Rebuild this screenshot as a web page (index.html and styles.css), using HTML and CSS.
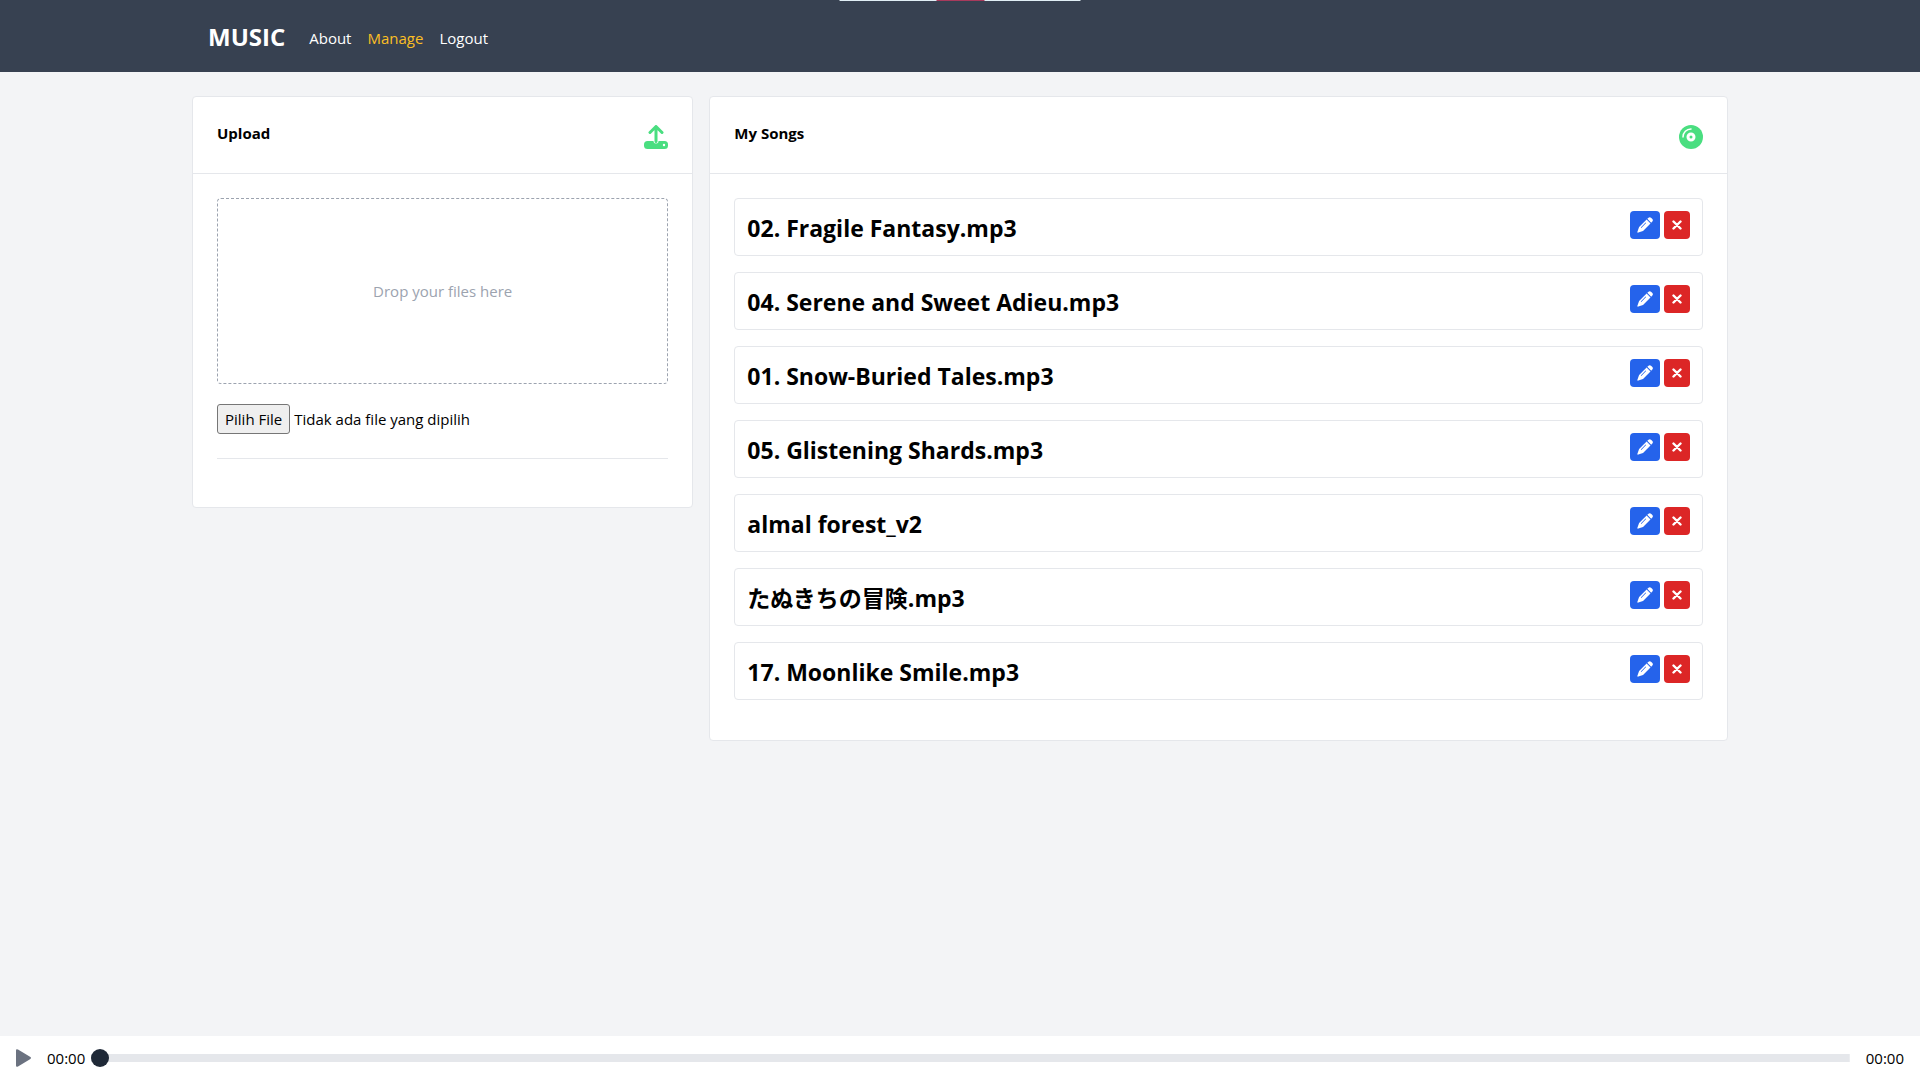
FILE: index.html
```html
<!DOCTYPE html>
<html lang="id">
<head>
<meta charset="utf-8">
<meta name="viewport" content="width=device-width, initial-scale=1">
<title>Music</title>
<link rel="stylesheet" href="styles.css">
</head>
<body>
<svg class="sprite" aria-hidden="true">
  <symbol id="pencil" viewBox="0 0 16 16">
    <path fill="currentColor" d="M11.200.9a2.200 2.200 0 0 1 3.100 0l.8.8a2.200 2.200 0 0 1 0 3.100L14.200 5.700 10.300 1.800z"/>
    <path fill="currentColor" fill-rule="evenodd" d="M9.600 2.500 13.500 6.400 6 13.900 1.300 15.600a.7.7 0 0 1-.9-.9L2.100 10zM4.300 10.900l4.800-4.800-.5-.5-4.800 4.800z"/>
  </symbol>
  <symbol id="cross" viewBox="0 0 10 10">
    <path fill="none" stroke="currentColor" stroke-width="2.400" stroke-linecap="round" d="M1.500 1.500l7 7M8.500 1.500l-7 7"/>
  </symbol>
</svg>
<div class="drag-handle" aria-hidden="true"><span></span></div>
<header class="navbar">
  <nav class="container nav">
    <a class="brand" href="#">MUSIC</a>
    <ul class="nav-links">
      <li><a href="#">About</a></li>
      <li><a class="active" href="#">Manage</a></li>
      <li><a href="#">Logout</a></li>
    </ul>
  </nav>
</header>
<main class="container columns">
  <section class="card upload">
    <div class="card-head">
      <h2>Upload</h2>
      <svg class="head-icon" viewBox="0 0 24 24" fill="none">
        <rect x="0" y="16" width="24" height="8" rx="3.500" fill="currentColor"/>
        <circle cx="20" cy="20" r="1.200" fill="#fff"/>
        <path d="M12 16V3" stroke="#fff" stroke-width="5" stroke-linecap="round"/>
        <path d="M12 16.500V2M6 7.500 12 1.500l6 6" stroke="currentColor" stroke-width="3" stroke-linecap="round" stroke-linejoin="round"/>
      </svg>
    </div>
    <div class="card-body">
      <div class="dropzone">Drop your files here</div>
      <label class="file">
        <input type="file" multiple>
        <span class="file-button">Pilih File</span>
        <span>Tidak ada file yang dipilih</span>
      </label>
      <hr>
    </div>
  </section>
  <section class="card songs">
    <div class="card-head">
      <h2>My Songs</h2>
      <svg class="head-icon" viewBox="0 0 24 24" fill="none">
        <circle cx="12" cy="12" r="12" fill="currentColor"/>
        <circle cx="12" cy="12" r="3" stroke="#fff" stroke-width="3"/>
        <path d="M4 12a8 8 0 0 1 8-8" stroke="#fff" stroke-width="1.500" stroke-linecap="round"/>
      </svg>
    </div>
    <ul class="card-body song-list">
      <li class="song"><h3>02. Fragile Fantasy.mp3</h3><button class="edit" aria-label="Edit"><svg><use href="#pencil"/></svg></button><button class="delete" aria-label="Delete"><svg><use href="#cross"/></svg></button></li>
      <li class="song"><h3>04. Serene and Sweet Adieu.mp3</h3><button class="edit" aria-label="Edit"><svg><use href="#pencil"/></svg></button><button class="delete" aria-label="Delete"><svg><use href="#cross"/></svg></button></li>
      <li class="song"><h3>01. Snow-Buried Tales.mp3</h3><button class="edit" aria-label="Edit"><svg><use href="#pencil"/></svg></button><button class="delete" aria-label="Delete"><svg><use href="#cross"/></svg></button></li>
      <li class="song"><h3>05. Glistening Shards.mp3</h3><button class="edit" aria-label="Edit"><svg><use href="#pencil"/></svg></button><button class="delete" aria-label="Delete"><svg><use href="#cross"/></svg></button></li>
      <li class="song"><h3>almal forest_v2</h3><button class="edit" aria-label="Edit"><svg><use href="#pencil"/></svg></button><button class="delete" aria-label="Delete"><svg><use href="#cross"/></svg></button></li>
      <li class="song"><h3 lang="ja">たぬきちの冒険.mp3</h3><button class="edit" aria-label="Edit"><svg><use href="#pencil"/></svg></button><button class="delete" aria-label="Delete"><svg><use href="#cross"/></svg></button></li>
      <li class="song"><h3>17. Moonlike Smile.mp3</h3><button class="edit" aria-label="Edit"><svg><use href="#pencil"/></svg></button><button class="delete" aria-label="Delete"><svg><use href="#cross"/></svg></button></li>
    </ul>
  </section>
</main>
<footer class="player">
  <button class="play" aria-label="Play"><svg viewBox="0 0 15 18"><path fill="currentColor" d="M0 1.500Q0-.5 2 .5L14 7.800q2 1.200 0 2.400L2 17.500q-2 1-2-1z"/></svg></button>
  <span class="time">00:00</span>
  <input class="seek" type="range" min="0" max="100" value="0" aria-label="Seek">
  <span class="time">00:00</span>
</footer>
</body>
</html>
```
FILE: styles.css
```css
*, *::before, *::after { box-sizing: border-box; }

body {
  margin: 0;
  min-height: 100vh;
  display: flex;
  flex-direction: column;
  background: #f3f4f6;
  color: #000;
  font: 15px/24px "Open Sans", "Noto Sans CJK JP", sans-serif;
}

h2, h3, ul { margin: 0; padding: 0; font-size: inherit; }
ul { list-style: none; }
a { color: inherit; text-decoration: none; }
button { padding: 0; border: 0; cursor: pointer; }
svg { display: block; }
.sprite { position: absolute; width: 0; height: 0; }

.container { width: 80%; margin: 0 auto; }

/* Thin handle laid over the top edge of the window */
.drag-handle {
  position: absolute;
  top: 0;
  left: 50%;
  width: 241px;
  height: 1px;
  transform: translateX(-50%);
  background: #e0eef5;
}
.drag-handle span {
  display: block;
  width: 48px;
  height: 1px;
  margin: 0 auto;
  background: #a83a5c;
}

.navbar { background: #374151; color: #fff; }
.nav { display: flex; align-items: center; height: 72px; padding: 0 16px; }
.brand { font-size: 24px; font-weight: 700; line-height: 32px; padding-top: 2px; margin-right: 24px; }
.nav-links { display: flex; gap: 16px; padding-top: 4px; }
.nav-links .active { color: #fbbf24; }

.columns {
  display: grid;
  grid-template-columns: repeat(3, 1fr);
  align-items: start;
  gap: 16px;
  padding: 24px 0;
  flex: 1;
}
.songs { grid-column: span 2; }

.card { background: #fff; border: 1px solid #e5e7eb; border-radius: 4px; }
.card-head {
  display: flex;
  justify-content: space-between;
  padding: 24px;
  border-bottom: 1px solid #e5e7eb;
}
.card-head h2 { font-weight: 700; }
.head-icon { width: 24px; height: 24px; margin-top: 4px; color: #4ade80; }
.card-body { padding: 24px; }

.dropzone {
  padding: 80px 16px;
  border: 1px dashed #9ca3af;
  border-radius: 4px;
  color: #9ca3af;
  text-align: center;
}
.file { display: flex; align-items: center; gap: 4px; margin: 20px 0 24px; }
.file input { position: absolute; width: 1px; height: 1px; opacity: 0; }
.file-button {
  padding: 2px 7px;
  border: 1px solid #767676;
  border-radius: 3px;
  background: #efefef;
}
hr { margin: 0 0 24px; border: 0; border-top: 1px solid #e5e7eb; }

.song {
  display: flex;
  align-items: flex-start;
  gap: 4px;
  margin-bottom: 16px;
  padding: 12px;
  border: 1px solid #e5e7eb;
  border-radius: 4px;
}
.song h3 { flex: 1; padding-top: 2px; font-size: 23px; font-weight: 700; line-height: 30px; }
.song button {
  display: flex;
  align-items: center;
  justify-content: center;
  height: 28px;
  border-radius: 4px;
  color: #fff;
}
.song .edit { width: 30px; background: #2563eb; }
.song .edit svg { width: 16px; height: 16px; }
.song .delete { width: 26px; background: #dc2626; }
.song .delete svg { width: 10px; height: 10px; }

.player {
  display: flex;
  align-items: center;
  height: 44px;
  padding: 0 16px;
  background: #fff;
}
.play { background: none; color: #6b7280; margin-right: 16px; }
.play svg { width: 15px; height: 18px; }
.seek {
  flex: 1;
  min-width: 0;
  height: 18px;
  margin: 0 16px 0 6px;
  appearance: none;
  background: linear-gradient(#e5e7eb, #e5e7eb) center / 100% 8px no-repeat;
  border-radius: 4px;
}
.seek::-webkit-slider-thumb {
  appearance: none;
  width: 18px;
  height: 18px;
  border-radius: 50%;
  background: #1f2937;
}
```
